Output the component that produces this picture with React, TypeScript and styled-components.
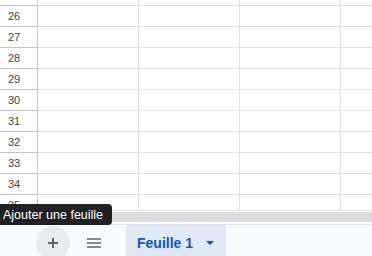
import React from "react";
import styled, { createGlobalStyle } from "styled-components";

const Global = createGlobalStyle`
  html, body { margin: 0; padding: 0; height: 256px; overflow: hidden; background: #ffffff; }
  #root { height: 256px; }
`;

const Page = styled.div`
  position: relative;
  width: 372px;
  height: 256px;
  overflow: hidden;
  display: flex;
  flex-direction: column;
  font-family: "Liberation Sans", Arial, sans-serif;
`;

const Grid = styled.div`
  height: 210px;
  overflow: hidden;
  display: flex;
  flex-direction: column;
  border-bottom: 1px solid #e1e1e1;
  flex-shrink: 0;
`;

const Row = styled.div<{ $h: number }>`
  display: grid;
  grid-template-columns: 38px repeat(4, 101px);
  height: ${(p) => p.$h}px;
  flex-shrink: 0;
`;

const HeaderCell = styled.div`
  box-sizing: border-box;
  border-right: 1px solid #c4c4c4;
  border-bottom: 1px solid #c4c4c4;
  font-size: 11px;
  color: #444444;
  display: flex;
  align-items: center;
  padding-left: 8px;
`;

const Cell = styled.div`
  box-sizing: border-box;
  border-right: 1px solid #e2e2e2;
  border-bottom: 1px solid #e2e2e2;
`;

const ScrollGap = styled.div`
  height: 1px;
  flex-shrink: 0;
`;

const ScrollBar = styled.div`
  height: 10px;
  background: #dadce0;
  flex-shrink: 0;
  border-bottom: 2px solid #ffffff;
`;

const TabBar = styled.div`
  flex: 1;
  display: flex;
  align-items: stretch;
  background: #f8fafd;
  border-top: 1px solid #e3e3e3;
  padding-left: 36px;
`;

const RoundButton = styled.div<{ $filled?: boolean }>`
  width: 34px;
  height: 34px;
  margin-top: 1px;
  border-radius: 50%;
  background: ${(p) => (p.$filled ? "#e8eaed" : "transparent")};
  display: flex;
  align-items: center;
  justify-content: center;
  flex-shrink: 0;
  margin-right: ${(p) => (p.$filled ? "7px" : "15px")};
`;

const Tab = styled.div`
  width: 100px;
  box-sizing: border-box;
  background: #e1e9f7;
  display: flex;
  align-items: center;
  padding: 2px 0 0 11px;
  gap: 13px;
  color: #0b57d0;
  font-size: 14px;
  font-weight: 700;
  height: 33px;
`;

const Tooltip = styled.div`
  position: absolute;
  left: -6px;
  top: 204px;
  height: 21px;
  box-sizing: border-box;
  padding: 0 9px;
  background: #202124;
  color: #ffffff;
  border-radius: 4px;
  font-size: 12.5px;
  display: flex;
  align-items: center;
  white-space: nowrap;
`;

const rows = [26, 27, 28, 29, 30, 31, 32, 33, 34, 35];

export default function App() {
  return (
    <Page>
      <Global />
      <Grid>
        <Row $h={6}>
          <HeaderCell />
          <Cell />
          <Cell />
          <Cell />
          <Cell />
        </Row>
        {rows.map((n) => (
          <Row key={n} $h={21}>
            <HeaderCell>{n}</HeaderCell>
            <Cell />
            <Cell />
            <Cell />
            <Cell />
          </Row>
        ))}
      </Grid>
      <ScrollGap />
      <ScrollBar />
      <TabBar>
        <RoundButton $filled>
          <svg width="12" height="12" viewBox="0 0 12 12">
            <path d="M6 1v10M1 6h10" stroke="#5f6368" strokeWidth="2" />
          </svg>
        </RoundButton>
        <RoundButton>
          <svg width="14" height="10" viewBox="0 0 14 10">
            <path d="M0 1h14M0 5h14M0 9h14" stroke="#5f6368" strokeWidth="1.6" />
          </svg>
        </RoundButton>
        <Tab>
          <span>Feuille 1</span>
          <svg width="8" height="4" viewBox="0 0 8 4">
            <path d="M0 0h8L4 4z" fill="#0b57d0" />
          </svg>
        </Tab>
      </TabBar>
      <Tooltip>Ajouter une feuille</Tooltip>
    </Page>
  );
}
